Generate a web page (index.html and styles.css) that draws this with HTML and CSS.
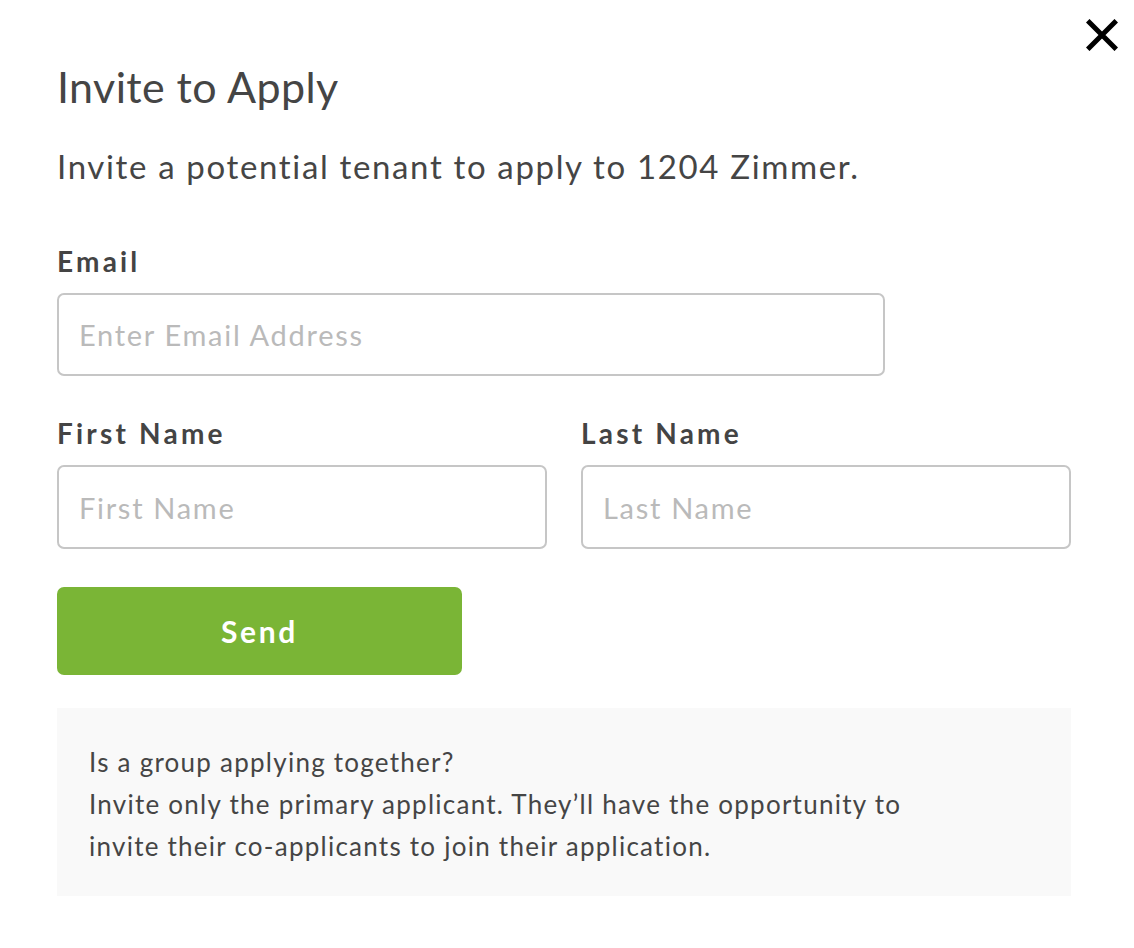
FILE: index.html
```html
<!DOCTYPE html>
<html lang="en">
<head>
<meta charset="utf-8">
<title>Invite to Apply</title>
<link rel="stylesheet" href="styles.css">
</head>
<body>
<div class="modal">
  <button class="close" aria-label="Close">
    <svg width="32" height="32" viewBox="0 0 32 32"><path d="M3.5 3.5 L28.5 28.5 M28.5 3.5 L3.5 28.5" stroke="#000" stroke-width="5" stroke-linecap="square" fill="none"/></svg>
  </button>
  <h1 class="title">Invite to Apply</h1>
  <p class="subtitle">Invite a potential tenant to apply to 1204 Zimmer.</p>
  <form class="form">
    <div class="field field-email">
      <label class="label" for="email">Email</label>
      <input class="input" id="email" type="text" placeholder="Enter Email Address">
    </div>
    <div class="row">
      <div class="field">
        <label class="label" for="first">First Name</label>
        <input class="input" id="first" type="text" placeholder="First Name">
      </div>
      <div class="field">
        <label class="label" for="last">Last Name</label>
        <input class="input" id="last" type="text" placeholder="Last Name">
      </div>
    </div>
    <button class="send" type="button">Send</button>
  </form>
  <div class="note">
    <p class="note-title">Is a group applying together?</p>
    <p class="note-text">Invite only the primary applicant. They’ll have the opportunity to<br>invite their co-applicants to join their application.</p>
  </div>
</div>
</body>
</html>
```

FILE: styles.css
```css
* { box-sizing: border-box; }
html, body { margin: 0; padding: 0; background: #fff; }
body { font-family: Lato, "Noto Sans", sans-serif; color: #464646; }

.modal {
  position: relative;
  padding: 61px 63px 0 57px;
}

.close {
  position: absolute;
  top: 19px;
  right: 16px;
  width: 32px;
  height: 32px;
  padding: 0;
  border: 0;
  background: none;
  cursor: pointer;
}
.close svg { display: block; }

.title {
  margin: 0;
  font-size: 43px;
  line-height: 52px;
  font-weight: 400;
  letter-spacing: 0.4px;
  color: #454545;
}

.subtitle {
  margin: 33px 0 0;
  font-size: 33px;
  line-height: 40px;
  font-weight: 400;
  letter-spacing: 1.65px;
  color: #454545;
}

.form { margin-top: 59px; }

.field { display: flex; flex-direction: column; }
.field-email { width: 828px; }

.label {
  font-size: 28px;
  line-height: 32px;
  font-weight: 700;
  letter-spacing: 3.2px;
  color: #444;
  margin-bottom: 16px;
}

.input {
  height: 83px;
  border: 2px solid #c6c6c6;
  border-radius: 7px;
  padding: 0 20px;
  font-family: Lato, "Noto Sans", sans-serif;
  font-size: 29px;
  letter-spacing: 1.7px;
  color: #444;
  background: #fff;
  outline: none;
}
.input::placeholder { color: #bababa; }

.row {
  display: grid;
  grid-template-columns: 1fr 1fr;
  column-gap: 34px;
  margin-top: 41px;
}
.row .input { height: 84px; }

.send {
  display: block;
  margin-top: 38px;
  width: 405px;
  height: 88px;
  border: 0;
  border-radius: 7px;
  background: #7ab536;
  color: #fff;
  font-family: Lato, "Noto Sans", sans-serif;
  font-size: 30px;
  font-weight: 700;
  letter-spacing: 2.7px;
  cursor: pointer;
}

.note {
  margin-top: 33px;
  background: #f9f9f9;
  padding: 33px 32px 29px;
}
.note p {
  margin: 0;
  font-size: 26px;
  line-height: 42px;
  letter-spacing: 1.25px;
  color: #454545;
}
```
